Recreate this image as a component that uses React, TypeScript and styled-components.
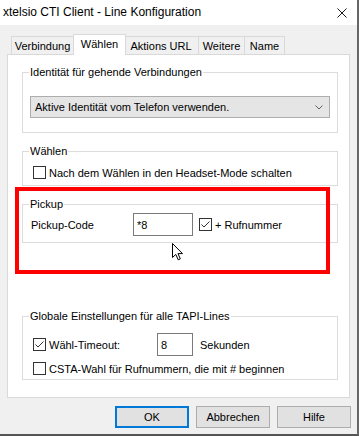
import React from "react";
import styled, { createGlobalStyle } from "styled-components";

const GlobalStyle = createGlobalStyle`
  html, body {
    margin: 0;
    padding: 0;
    background: #f0f0f0;
    overflow: hidden;
  }
  * {
    box-sizing: border-box;
  }
`;

const CheckBox = ({ checked }: { checked?: boolean }) => (
  <S.Box>
    {checked && (
      <svg width="11" height="11" viewBox="0 0 11 11">
        <polyline
          points="1.5,5.5 4,8 9.5,2.5"
          fill="none"
          stroke="#333"
          strokeWidth="1"
        />
      </svg>
    )}
  </S.Box>
);

const App = () => {
  return (
    <>
      <GlobalStyle />
      <S.Window>
        <S.TitleBar>
          <span>xtelsio CTI Client - Line Konfiguration</span>
          <svg width="10" height="10" viewBox="0 0 10 10">
            <path d="M0.5 0.5 L9.5 9.5 M9.5 0.5 L0.5 9.5" stroke="#1a1a1a" strokeWidth="1" />
          </svg>
        </S.TitleBar>

        <S.Body>
          <S.TabRow>
            <S.Tab $w={63}>Verbindung</S.Tab>
            <S.Tab $w={53} $active>Wählen</S.Tab>
            <S.Tab $w={76}>Aktions URL</S.Tab>
            <S.Tab $w={47}>Weitere</S.Tab>
            <S.Tab $w={41}>Name</S.Tab>
          </S.TabRow>

          <S.Panel>
            <S.Group $top={11} $pt={17} $pb={14} $px={7}>
              <legend>Identität für gehende Verbindungen</legend>
              <S.Combo>
                <span>Aktive Identität vom Telefon verwenden.</span>
                <svg width="8" height="5" viewBox="0 0 8 5">
                  <polyline points="0.5,0.5 4,4 7.5,0.5" fill="none" stroke="#606060" />
                </svg>
              </S.Combo>
            </S.Group>

            <S.Group $top={12} $pt={8} $pb={6} $px={10}>
              <legend>Wählen</legend>
              <S.CheckRow>
                <CheckBox />
                <span>Nach dem Wählen in den Headset-Mode schalten</span>
              </S.CheckRow>
            </S.Group>

            <S.Group $top={12} $pt={2} $pb={6} $px={8}>
              <legend>Pickup</legend>
              <S.FieldRow>
                <S.FieldLabel $w={102}>Pickup-Code</S.FieldLabel>
                <S.Input $w={60}>*8</S.Input>
                <S.CheckRow $ml={6}>
                  <CheckBox checked />
                  <span>+ Rufnummer</span>
                </S.CheckRow>
              </S.FieldRow>
            </S.Group>

            <S.Group $top={67} $pt={10} $pb={4} $px={10}>
              <legend>Globale Einstellungen für alle TAPI-Lines</legend>
              <S.FieldRow>
                <S.CheckRow>
                  <CheckBox checked />
                  <S.FieldLabel $w={108}>Wähl-Timeout:</S.FieldLabel>
                </S.CheckRow>
                <S.Input $w={36}>8</S.Input>
                <S.Unit>Sekunden</S.Unit>
              </S.FieldRow>
              <S.CheckRow $mt={6}>
                <CheckBox />
                <span>CSTA-Wahl für Rufnummern, die mit # beginnen</span>
              </S.CheckRow>
            </S.Group>

            <S.Highlight />
            <S.Cursor width="12" height="18" viewBox="0 0 12 18">
              <path
                d="M0.5 0.5 V14.5 L3.8 11.4 L6.2 16.8 L8.3 15.9 L6 10.6 H10.5 Z"
                fill="#fff"
                stroke="#000"
                strokeWidth="1"
                strokeLinejoin="miter"
              />
            </S.Cursor>
          </S.Panel>

          <S.ButtonRow>
            <S.Button $default>OK</S.Button>
            <S.Button>Abbrechen</S.Button>
            <S.Button>Hilfe</S.Button>
          </S.ButtonRow>
        </S.Body>
      </S.Window>
    </>
  );
};

export default App;

const S = {
  Window: styled.div`
    width: 359px;
    height: 436px;
    background: #f0f0f0;
    border-right: 2px solid #666;
    border-bottom: 2px solid #555;
    font-family: "Liberation Sans", Arial, sans-serif;
    font-size: 11px;
    color: #000;
    display: flex;
    flex-direction: column;
    overflow: hidden;
  `,
  TitleBar: styled.div`
    height: 25px;
    background: #fff;
    display: flex;
    align-items: center;
    justify-content: space-between;
    padding: 0 10px 1px 3px;
    font-size: 12px;
    color: #000;
    svg {
      margin-top: 1px;
    }
  `,
  Body: styled.div`
    padding: 9px 0 0 7px;
  `,
  TabRow: styled.div`
    display: flex;
    align-items: flex-end;
    height: 20px;
    padding-left: 4px;
  `,
  Tab: styled.div<{ $active?: boolean; $w: number }>`
    position: relative;
    width: ${(p) => p.$w}px;
    height: ${(p) => (p.$active ? 21 : 18)}px;
    margin: ${(p) => (p.$active ? "0 -2px -1px -2px" : "0")};
    z-index: ${(p) => (p.$active ? 2 : 0)};
    background: ${(p) => (p.$active ? "#fff" : "#f0f0f0")};
    border: 1px solid #d9d9d9;
    border-bottom: none;
    display: flex;
    align-items: center;
    justify-content: center;
    padding-bottom: ${(p) => (p.$active ? 2 : 0)}px;
    white-space: nowrap;
    & + & {
      margin-left: ${(p) => (p.$active ? "-2px" : "-1px")};
    }
  `,
  Panel: styled.div`
    position: relative;
    width: 343px;
    height: 344px;
    background: #fff;
    border: 1px solid #d9d9d9;
    padding: 0 11px 0 14px;
    display: flex;
    flex-direction: column;
  `,
  Group: styled.fieldset<{ $top: number; $pt: number; $pb: number; $px: number }>`
    margin: ${(p) => p.$top}px 0 0 0;
    padding: ${(p) => `${p.$pt}px ${p.$px}px ${p.$pb}px ${p.$px}px`};
    border: 1px solid #dcdcdc;
    min-width: 0;
    width: 316px;
    legend {
      padding: 0 1px;
      margin-left: ${(p) => 6 - p.$px}px;
      line-height: 13px;
      font-size: 11px;
    }
  `,
  Combo: styled.div`
    width: 300px;
    height: 22px;
    background: #e5e5e5;
    border: 1px solid #adadad;
    display: flex;
    align-items: center;
    justify-content: space-between;
    padding: 0 6px 0 4px;
    svg {
      margin-top: 1px;
    }
  `,
  CheckRow: styled.div<{ $ml?: number; $mt?: number }>`
    display: flex;
    align-items: center;
    gap: 3px;
    height: 13px;
    margin-left: ${(p) => p.$ml ?? 0}px;
    margin-top: ${(p) => p.$mt ?? 0}px;
    white-space: nowrap;
  `,
  Box: styled.div`
    width: 13px;
    height: 13px;
    flex: none;
    border: 1px solid #333;
    background: #fff;
    display: flex;
    align-items: center;
    justify-content: center;
  `,
  FieldRow: styled.div`
    display: flex;
    align-items: center;
    height: 23px;
  `,
  FieldLabel: styled.span<{ $w: number }>`
    width: ${(p) => p.$w}px;
    white-space: nowrap;
  `,
  Input: styled.div<{ $w: number }>`
    width: ${(p) => p.$w}px;
    height: 23px;
    border: 1px solid #7a7a7a;
    background: #fff;
    padding: 0 3px;
    display: flex;
    align-items: center;
  `,
  Unit: styled.span`
    margin-left: 7px;
  `,
  Highlight: styled.div`
    position: absolute;
    left: 7px;
    top: 132px;
    width: 315px;
    height: 87px;
    border: 4px solid #f00;
    pointer-events: none;
  `,
  Cursor: styled.svg`
    position: absolute;
    left: 164px;
    top: 188px;
  `,
  ButtonRow: styled.div`
    display: flex;
    justify-content: flex-end;
    gap: 7px;
    margin-top: 8px;
    padding-right: 6px;
  `,
  Button: styled.div<{ $default?: boolean }>`
    width: 74px;
    height: 22px;
    background: #e1e1e1;
    border: ${(p) => (p.$default ? "2px solid #0078d7" : "1px solid #adadad")};
    display: flex;
    align-items: center;
    justify-content: center;
    font-size: 11px;
  `,
};
